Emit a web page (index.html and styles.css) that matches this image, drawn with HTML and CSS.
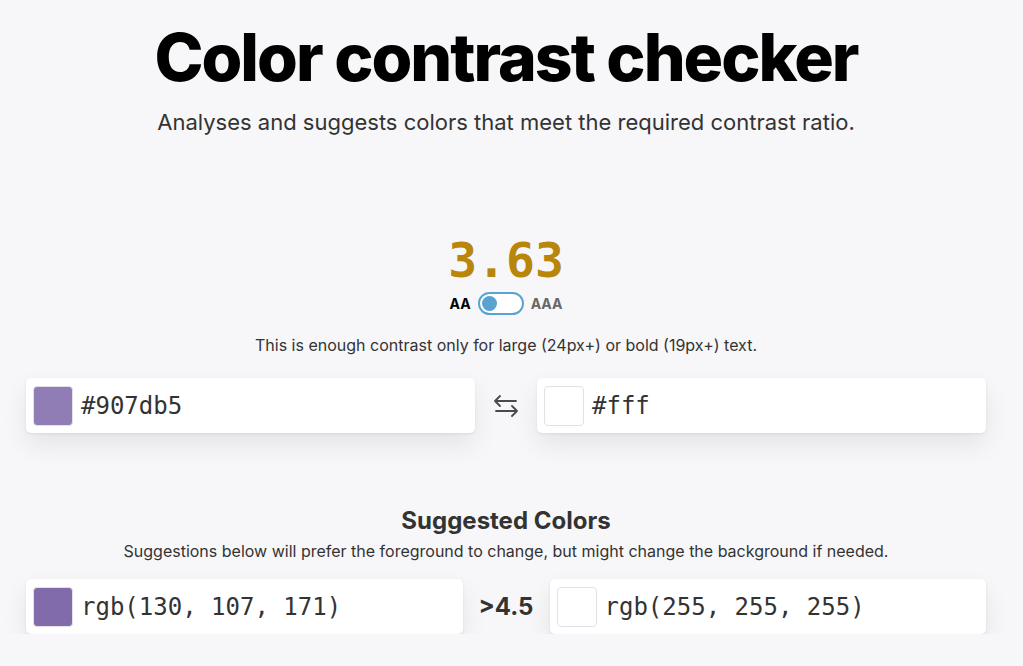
FILE: index.html
```html
<!DOCTYPE html>
<html lang="en">
<head>
    <meta charset="UTF-8">
    <meta name="viewport" content="width=device-width, initial-scale=1.0">
    <title>Color contrast checker</title>
    <link rel="stylesheet" href="styles.css">
</head>
<body>
    <main class="page">
        <h1 class="title">Color contrast checker</h1>
        <p class="subtitle">Analyses and suggests colors that meet the required contrast ratio.</p>

        <section class="result">
            <div class="score">3.63</div>
            <div class="level">
                <span class="level-label active">AA</span>
                <span class="toggle"><span class="toggle-knob"></span></span>
                <span class="level-label">AAA</span>
            </div>
            <p class="verdict">This is enough contrast only for large (24px+) or bold (19px+) text.</p>
        </section>

        <div class="pair">
            <div class="color-field">
                <span class="swatch" style="background: #907db5;"></span>
                <span class="color-value">#907db5</span>
            </div>
            <button class="swap" title="Swap colors">
                <svg width="26" height="26" viewBox="0 0 26 26" fill="none" stroke="#4a4a4a" stroke-width="1.8" stroke-linecap="round" stroke-linejoin="round">
                    <path d="M2 8h21M2 8l5-5M2 8l5 5"/>
                    <path d="M24 18H3M24 18l-5-5M24 18l-5 5"/>
                </svg>
            </button>
            <div class="color-field">
                <span class="swatch" style="background: #fff;"></span>
                <span class="color-value">#fff</span>
            </div>
        </div>

        <section class="suggested">
            <h2>Suggested Colors</h2>
            <p>Suggestions below will prefer the foreground to change, but might change the background if needed.</p>
        </section>

        <div class="pair pair-suggested">
            <div class="color-field">
                <span class="swatch" style="background: rgb(130, 107, 171);"></span>
                <span class="color-value">rgb(130, 107, 171)</span>
            </div>
            <span class="ratio">&gt;4.5</span>
            <div class="color-field">
                <span class="swatch" style="background: rgb(255, 255, 255);"></span>
                <span class="color-value">rgb(255, 255, 255)</span>
            </div>
        </div>
    </main>
</body>
</html>
```

FILE: styles.css
```css
html, body { margin: 0; padding: 0; }
body { background: #f7f7f9; font-family: Inter, "Noto Sans", sans-serif; color: #333; }

.page { width: 960px; margin-left: 26px; display: flex; flex-direction: column; align-items: center; }

.title { margin: 19px 0 0; font-size: 66px; font-weight: 800; letter-spacing: -0.03em; line-height: 76px; color: #000; }
.subtitle { margin: 12px 0 0; font-size: 22px; line-height: 30px; color: #333; }

.result { margin-top: 95px; display: flex; flex-direction: column; align-items: center; }
.score { font-family: "DejaVu Sans Mono", monospace; font-weight: bold; font-size: 48px; line-height: 56px; color: #b8860b; }
.level { display: flex; align-items: center; gap: 7px; margin-top: 4px; }
.level-label { font-size: 14px; font-weight: 700; color: #666; }
.level-label.active { color: #000; }
.toggle { width: 46px; height: 23px; box-sizing: border-box; border: 2px solid #5aa2d0; border-radius: 12px; background: #fff; display: flex; align-items: center; padding-left: 2px; }
.toggle-knob { width: 15px; height: 15px; border-radius: 50%; background: #5aa2d0; }
.verdict { margin: 20px 0 0; font-size: 16px; line-height: 20px; color: #333; }

.pair { width: 100%; display: flex; align-items: center; margin-top: 23px; }
.color-field { flex: 1; height: 55px; box-sizing: border-box; padding: 7px; display: flex; align-items: center; gap: 8px; background: #fff; border-radius: 5px; box-shadow: 0 1px 3px rgba(0,0,0,0.07), 0 12px 26px rgba(0,0,0,0.08); }
.swatch { width: 40px; height: 40px; box-sizing: border-box; border: 1px solid #e2e2e6; border-radius: 4px; flex: none; }
.color-value { font-family: "DejaVu Sans Mono", monospace; font-size: 24px; color: #333; }
.swap { width: 62px; display: flex; justify-content: center; background: none; border: none; padding: 0; }

.suggested { margin-top: 73px; text-align: center; }
.suggested h2 { margin: 0; font-size: 24px; line-height: 30px; font-weight: 700; color: #333; }
.suggested p { margin: 4px 0 0; font-size: 16px; line-height: 22px; color: #333; }

.pair-suggested { margin-top: 17px; }
.ratio { width: 87px; text-align: center; font-size: 24px; font-weight: 700; color: #333; }
```
